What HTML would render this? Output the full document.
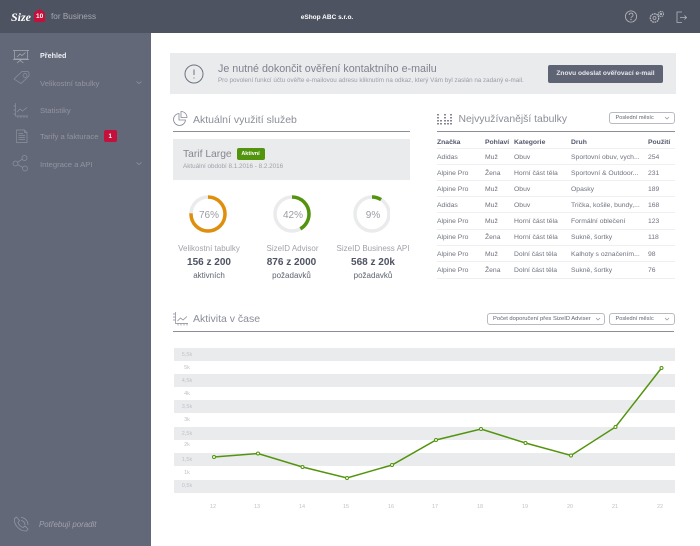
<!DOCTYPE html>
<html lang="cs"><head><meta charset="utf-8"><title>Size ID</title>
<style>
html,body{margin:0;padding:0;width:700px;height:546px;overflow:hidden;background:#fff;font-family:"Liberation Sans",sans-serif}
.t{position:absolute;white-space:nowrap;line-height:1}
#top{position:absolute;left:0;top:0;width:700px;height:33px;background:#4e5361}
#side{position:absolute;left:0;top:33px;width:151px;height:513px;background:#636879}
.n{font-size:7.7px;color:#92959f}
.h{font-size:10.5px;color:#8b8e98}
.th{font-size:6.8px;font-weight:bold;color:#53576a}
.td{font-size:6.8px;color:#70737f}
.ln{position:absolute;left:437px;width:238px;height:1px;background:#eeeff0}
.band{position:absolute;left:174px;width:501px;height:13px;background:#eaebed}
.y{font-size:5.5px;color:#c0c2c8;width:24px;text-align:center}
.x{font-size:5.5px;color:#c0c2c8;width:20px;text-align:center}
.sel{position:absolute;height:10px;border:1px solid #b9bbc2;border-radius:3px;background:#fff;box-sizing:content-box}
.c{text-align:center;transform:translateX(-50%)}
</style></head><body>
<div id="top"></div><div id="side"></div>

<!-- logo -->
<div class="t" style="left:11px;top:10px;font:italic bold 12px 'Liberation Serif',serif;color:#fff">Size</div>
<svg style="position:absolute;left:33px;top:8px" width="13" height="15"><path d="M1 4.500L6.500 1 12 4.500V14H1z" fill="#c5103c"/></svg>
<div class="t" style="left:36px;top:13.500px;font-size:6.500px;font-weight:bold;color:#fff">10</div>
<div class="t" style="left:51px;top:13px;font-size:8.200px;color:#a5a8b1">for Business</div>
<div class="t c" style="left:327px;top:14.500px;font-size:6.500px;font-weight:bold;color:#fff">eShop ABC s.r.o.</div>

<!-- top icons -->
<svg style="position:absolute;left:620px;top:6px" width="70" height="22" fill="none" stroke="#b5b7be" stroke-width=".8">
<circle cx="11" cy="10.500" r="5.600"/><path d="M9.200 9a1.900 1.900 0 1 1 2.700 1.700c-.6.3-.9.700-.9 1.300"/><circle cx="11" cy="13.500" r=".3"/>
<circle cx="34.500" cy="12" r="4.200" stroke-dasharray="1.700 .7" stroke-width="1.300"/><circle cx="34.500" cy="12" r="1.500"/>
<circle cx="41" cy="8" r="2.600" stroke-dasharray="1.200 .6" stroke-width="1"/><circle cx="41" cy="8" r=".8"/>
<path d="M62 6H57V16.500H62M60 11.500H66.500M64.500 9.500l2 2-2 2"/></svg>

<!-- sidebar -->
<svg style="position:absolute;left:12px;top:48px" width="20" height="150" fill="none" stroke="#a9abb4" stroke-width=".7">
<path d="M2.500 2.500H15.500V11H2.500zM1 2.500H17M1 11.500H17M5 9l3-3 2 1.500 3.500-3M9 11.500v1M5 15l3-2.500L11.500 15"/>
<g stroke="#8e919d"><path d="M2 31l8-7.500h5c1.700 0 2 1 2 2v2.500l-8 7.500z"/><circle cx="13" cy="27.500" r="2"/></g>
<g stroke="#8e919d"><path d="M3.500 55V68H16M1.500 58H3.500M1.500 62H3.500M1.500 66H3.500M5 64l3-3 2.500 2L15 59.500M6 70V68M9 70V68M12 70V68M15 70V68"/></g>
<g stroke="#8e919d"><path d="M4.500 82H12.500L15 84.500V94.500H4.500zM12.500 82V84.500H15M6.500 85.500H11M6.500 87.500H13M6.500 89.500H13M6.500 91.500H13"/></g>
<g stroke="#8e919d"><circle cx="3.500" cy="115.500" r="2.500"/><circle cx="12.500" cy="110" r="2.500"/><circle cx="13" cy="120.500" r="2.500"/><path d="M5.700 114.200l4.600-3M5.800 116.700l5 2.700"/></g>
</svg>
<div class="t" style="left:40px;top:52px;font-size:7.200px;font-weight:bold;color:#eef0f3">Přehled</div>
<div class="t n" style="left:40px;top:79.500px">Velikostní tabulky</div>
<div class="t n" style="left:40px;top:106.500px">Statistiky</div>
<div class="t n" style="left:40px;top:132.500px">Tarify a fakturace</div>
<div class="t n" style="left:40px;top:160.500px">Integrace a API</div>
<div style="position:absolute;left:104px;top:130px;width:13px;height:12px;background:#c5103c;border-radius:2px"></div>
<div class="t" style="left:108.500px;top:133.500px;font-size:6px;font-weight:bold;color:#fff">1</div>
<svg style="position:absolute;left:135px;top:80px" width="8" height="86" fill="none" stroke="#9295a0" stroke-width=".8"><path d="M1.500 1.500l2.500 2 2.500-2M1.500 82.500l2.500 2 2.500-2"/></svg>
<svg style="position:absolute;left:13px;top:516px" width="17" height="17" fill="none" stroke="#9295a0" stroke-width=".8"><path d="M1.500 2.500l2-1.500 3 3.500-1.500 2c1 2.500 2.500 4 5 5l2-1.500 3 3-1.500 2C7 15.500 .5 9 1.500 2.500zM8 1.500c3.500 0 7 3 7 7.500M8 4.500c2 0 4 2 4 4.500"/></svg>
<div class="t" style="left:39px;top:520.500px;font-size:7.900px;font-style:italic;color:#9fa2ad">Potřebuji poradit</div>

<!-- alert -->
<div style="position:absolute;left:169.500px;top:53px;width:506px;height:41px;background:#eaebed"></div>
<svg style="position:absolute;left:183px;top:63px" width="22" height="22" fill="none" stroke="#6f7280" stroke-width="1"><circle cx="11" cy="11" r="9"/><path d="M11 6.500V12M11 14.500V15.500"/></svg>
<div class="t" style="left:218px;top:63.500px;font-size:10.700px;color:#7f828d">Je nutné dokončit ověření kontaktního e-mailu</div>
<div class="t" style="left:218px;top:78px;font-size:6.270px;color:#9a9ca6">Pro povolení funkcí účtu ověřte e-mailovou adresu kliknutím na odkaz, který Vám byl zaslán na zadaný e-mail.</div>
<div style="position:absolute;left:548px;top:65px;width:115px;height:18px;background:#5f6475;border-radius:2px"></div>
<div class="t c" style="left:605.500px;top:71px;font-size:6.600px;font-weight:bold;color:#e6e7ea">Znovu odeslat ověřovací e-mail</div>

<!-- services -->
<svg style="position:absolute;left:172px;top:110px" width="17" height="17" fill="none" stroke="#858894" stroke-width=".8"><path d="M7 3.500a6 6 0 1 0 6.500 6.500H7zM9 1.500a6 6 0 0 1 6 6H9z"/></svg>
<div class="t h" style="left:193px;top:114.500px">Aktuální využití služeb</div>
<div style="position:absolute;left:173px;top:131px;width:237px;height:1px;background:#8b8d98"></div>
<div style="position:absolute;left:173px;top:139px;width:237px;height:41px;background:#eaebed"></div>
<div class="t" style="left:183px;top:149.500px;font-size:10.300px;color:#84878f">Tarif Large</div>
<div style="position:absolute;left:236.500px;top:147.500px;width:28px;height:12px;background:#53940e;border-radius:2px"></div>
<div class="t c" style="left:250.500px;top:151.500px;font-size:5.500px;font-weight:bold;color:#fff">Aktivní</div>
<div class="t" style="left:183px;top:164px;font-size:6.300px;color:#a0a2aa">Aktuální období 8.1.2016 - 8.2.2016</div>

<svg style="position:absolute;left:180px;top:190px" width="210" height="50" fill="none" stroke-width="3.500">
<g stroke="#eaebed"><circle cx="28" cy="24" r="17"/><circle cx="112" cy="24" r="17"/><circle cx="192" cy="24" r="17"/></g>
<circle cx="28" cy="24" r="17" stroke="#e08f0d" pathLength="100" stroke-dasharray="76 100" transform="rotate(-90 28 24)"/>
<circle cx="112" cy="24" r="17" stroke="#53940e" pathLength="100" stroke-dasharray="42 100" transform="rotate(-90 112 24)"/>
<circle cx="192" cy="24" r="17" stroke="#53940e" pathLength="100" stroke-dasharray="9 100" transform="rotate(-90 192 24)"/>
</svg>
<div class="t c" style="left:209px;top:210.500px;font-size:10px;color:#9a9ca4">76%</div>
<div class="t c" style="left:293px;top:210.500px;font-size:10px;color:#9a9ca4">42%</div>
<div class="t c" style="left:373px;top:210.500px;font-size:10px;color:#9a9ca4">9%</div>
<div class="t c" style="left:209px;top:245px;font-size:8px;color:#a0a2aa">Velikostní tabulky</div>
<div class="t c" style="left:292.500px;top:245px;font-size:8px;color:#a0a2aa">SizeID Advisor</div>
<div class="t c" style="left:373px;top:245px;font-size:8px;color:#a0a2aa">SizeID Business API</div>
<div class="t c" style="left:209px;top:258px;font-size:10px;font-weight:bold;color:#4e5361">156 z 200</div>
<div class="t c" style="left:291.500px;top:258px;font-size:10px;font-weight:bold;color:#4e5361">876 z 2000</div>
<div class="t c" style="left:373px;top:258px;font-size:10px;font-weight:bold;color:#4e5361">568 z 20k</div>
<div class="t c" style="left:209px;top:272px;font-size:8px;color:#5f6371">aktivních</div>
<div class="t c" style="left:291.500px;top:272px;font-size:8px;color:#5f6371">požadavků</div>
<div class="t c" style="left:373px;top:272px;font-size:8px;color:#5f6371">požadavků</div>

<!-- table -->
<svg style="position:absolute;left:437px;top:112px" width="17" height="14" fill="#858894"><path d="M0 2h2v1.500H0zM0 5h2v1.500H0zM0 8h2v1.500H0zM0 11h2v1.500H0zM3 11h2v1.500H3zM3 8h2v1.500H3zM7 5h2v1.500H7zM7 8h2v1.500H7zM7 11h2v1.500H7zM7 2h2v1.500H7zM10 8h2v1.500H10zM10 11h2v1.500H10zM13 2h2v1.500H13zM13 5h2v1.500H13zM13 8h2v1.500H13zM13 11h2v1.500H13z"/></svg>
<div class="t h" style="left:458.500px;top:114.500px;font-size:10.400px">Nejvyužívanější tabulky</div>
<div class="sel" style="left:609px;top:112px;width:64px"></div>
<div class="t" style="left:615.500px;top:115.500px;font-size:5.600px;color:#5f6371">Poslední měsíc</div>
<svg style="position:absolute;left:664px;top:116px" width="7" height="5" fill="none" stroke="#8e919d" stroke-width=".7"><path d="M1 1l2 2 2-2"/></svg>
<div style="position:absolute;left:437px;top:131px;width:238px;height:1px;background:#8b8d98"></div>

<div class="t th" style="left:437px;top:140px">Značka</div><div class="t th" style="left:485px;top:140px">Pohlaví</div><div class="t th" style="left:514px;top:140px">Kategorie</div><div class="t th" style="left:571px;top:140px">Druh</div><div class="t th" style="left:648px;top:140px">Použití</div>
<div class="ln" style="top:148px"></div><div class="ln" style="top:164px"></div><div class="ln" style="top:180px"></div><div class="ln" style="top:196px"></div><div class="ln" style="top:212px"></div><div class="ln" style="top:229px"></div><div class="ln" style="top:245px"></div><div class="ln" style="top:261px"></div><div class="ln" style="top:278px"></div>

<div class="t td" style="left:437px;top:155px">Adidas</div><div class="t td" style="left:485px;top:155px">Muž</div><div class="t td" style="left:514px;top:155px">Obuv</div><div class="t td" style="left:571px;top:155px">Sportovní obuv, vych...</div><div class="t td" style="left:648px;top:155px">254</div>
<div class="t td" style="left:437px;top:171px">Alpine Pro</div><div class="t td" style="left:485px;top:171px">Žena</div><div class="t td" style="left:514px;top:171px">Horní část těla</div><div class="t td" style="left:571px;top:171px">Sportovní &amp; Outdoor...</div><div class="t td" style="left:648px;top:171px">231</div>
<div class="t td" style="left:437px;top:187px">Alpine Pro</div><div class="t td" style="left:485px;top:187px">Muž</div><div class="t td" style="left:514px;top:187px">Obuv</div><div class="t td" style="left:571px;top:187px">Opasky</div><div class="t td" style="left:648px;top:187px">189</div>
<div class="t td" style="left:437px;top:203px">Adidas</div><div class="t td" style="left:485px;top:203px">Muž</div><div class="t td" style="left:514px;top:203px">Obuv</div><div class="t td" style="left:571px;top:203px">Trička, košile, bundy,...</div><div class="t td" style="left:648px;top:203px">168</div>
<div class="t td" style="left:437px;top:219px">Alpine Pro</div><div class="t td" style="left:485px;top:219px">Muž</div><div class="t td" style="left:514px;top:219px">Horní část těla</div><div class="t td" style="left:571px;top:219px">Formální oblečení</div><div class="t td" style="left:648px;top:219px">123</div>
<div class="t td" style="left:437px;top:235px">Alpine Pro</div><div class="t td" style="left:485px;top:235px">Žena</div><div class="t td" style="left:514px;top:235px">Horní část těla</div><div class="t td" style="left:571px;top:235px">Sukně, šortky</div><div class="t td" style="left:648px;top:235px">118</div>
<div class="t td" style="left:437px;top:252px">Alpine Pro</div><div class="t td" style="left:485px;top:252px">Muž</div><div class="t td" style="left:514px;top:252px">Dolní část těla</div><div class="t td" style="left:571px;top:252px">Kalhoty s označením...</div><div class="t td" style="left:648px;top:252px">98</div>
<div class="t td" style="left:437px;top:268px">Alpine Pro</div><div class="t td" style="left:485px;top:268px">Žena</div><div class="t td" style="left:514px;top:268px">Dolní část těla</div><div class="t td" style="left:571px;top:268px">Sukně, šortky</div><div class="t td" style="left:648px;top:268px">76</div>

<!-- activity -->
<svg style="position:absolute;left:172px;top:311px" width="17" height="15" fill="none" stroke="#858894" stroke-width=".7"><path d="M3.500 1V12.500H16M1 3H3.500M1 6H3.500M1 9H3.500M5.500 10l3-3 2.500 2L15 5.500M6 14.500V12.500M9 14.500V12.500M12 14.500V12.500M15 14.500V12.500"/></svg>
<div class="t h" style="left:193px;top:313.500px">Aktivita v čase</div>
<div style="position:absolute;left:173px;top:331px;width:501px;height:1px;background:#8b8d98"></div>
<div class="sel" style="left:487px;top:313px;width:116px"></div>
<div class="t" style="left:493px;top:316.500px;font-size:5.800px;color:#5f6371">Počet doporučení přes SizeID Adviser</div>
<svg style="position:absolute;left:595px;top:317px" width="7" height="5" fill="none" stroke="#8e919d" stroke-width=".7"><path d="M1 1l2 2 2-2"/></svg>
<div class="sel" style="left:609px;top:313px;width:64px"></div>
<div class="t" style="left:615.500px;top:316.500px;font-size:5.600px;color:#5f6371">Poslední měsíc</div>
<svg style="position:absolute;left:664px;top:317px" width="7" height="5" fill="none" stroke="#8e919d" stroke-width=".7"><path d="M1 1l2 2 2-2"/></svg>

<div class="band" style="top:347.500px"></div><div class="band" style="top:374px"></div><div class="band" style="top:400px"></div><div class="band" style="top:427px"></div><div class="band" style="top:453px"></div><div class="band" style="top:479.500px"></div>
<div class="t y" style="left:175px;top:352.500px">5,5k</div><div class="t y" style="left:175px;top:366px">5k</div><div class="t y" style="left:175px;top:379px">4,5k</div><div class="t y" style="left:175px;top:392px">4k</div><div class="t y" style="left:175px;top:405px">3,5k</div><div class="t y" style="left:175px;top:418px">3k</div><div class="t y" style="left:175px;top:431.500px">2,5k</div><div class="t y" style="left:175px;top:443px">2k</div><div class="t y" style="left:175px;top:458px">1,5k</div><div class="t y" style="left:175px;top:471px">1k</div><div class="t y" style="left:175px;top:484px">0,5k</div>
<div class="t x" style="left:203px;top:504.500px">12</div><div class="t x" style="left:247px;top:504.500px">13</div><div class="t x" style="left:292px;top:504.500px">14</div><div class="t x" style="left:336px;top:504.500px">15</div><div class="t x" style="left:381px;top:504.500px">16</div><div class="t x" style="left:425px;top:504.500px">17</div><div class="t x" style="left:470px;top:504.500px">18</div><div class="t x" style="left:515px;top:504.500px">19</div><div class="t x" style="left:560px;top:504.500px">20</div><div class="t x" style="left:605px;top:504.500px">21</div><div class="t x" style="left:650px;top:504.500px">22</div>
<svg style="position:absolute;left:0;top:0" width="700" height="546" fill="none" stroke="#53940e">
<polyline stroke-width="1.500" points="214,457 258,453.500 302.500,467 347,478 392,465 436,440 481,429 525.500,443 571,455.500 615.500,427 661.500,368"/>
<g fill="#fff" stroke-width="1"><circle cx="214" cy="457" r="1.500"/><circle cx="258" cy="453.500" r="1.500"/><circle cx="302.500" cy="467" r="1.500"/><circle cx="347" cy="478" r="1.500"/><circle cx="392" cy="465" r="1.500"/><circle cx="436" cy="440" r="1.500"/><circle cx="481" cy="429" r="1.500"/><circle cx="525.500" cy="443" r="1.500"/><circle cx="571" cy="455.500" r="1.500"/><circle cx="615.500" cy="427" r="1.500"/><circle cx="661.500" cy="368" r="1.500"/></g>
</svg>
</body></html>
